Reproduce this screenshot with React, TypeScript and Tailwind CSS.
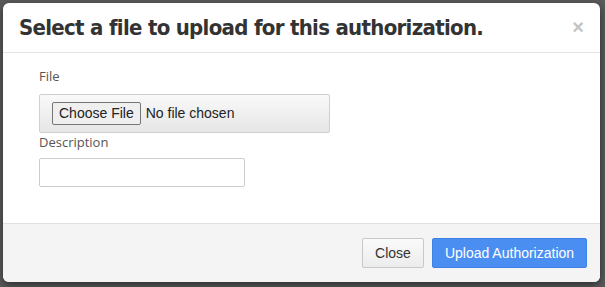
import React from 'react';

const UploadAuthorizationModal = () => {
  return (
    <div className="w-[605px] h-[287px] bg-[#5a5a5a] p-[3px] pr-[5px] pb-[5px] overflow-hidden">
      <div className="h-full rounded-[6px] bg-white flex flex-col overflow-hidden shadow-[0_3px_9px_rgba(0,0,0,0.5)]">
        <div className="h-[50px] shrink-0 border-b border-[#e5e5e5] flex items-center justify-between pl-[16px] pr-[16px]">
          <h4 className="text-[22px] font-semibold text-[#333] tracking-[-0.7px] font-['DejaVu_Sans_Condensed','Open_Sans',sans-serif]">
            Select a file to upload for this authorization.
          </h4>
          <button className="text-[#c4c4c4] text-[20px] font-bold leading-none font-['Liberation_Sans',sans-serif] mb-[2px]">
            ×
          </button>
        </div>

        <div className="flex-1 pl-[36px] pt-[14px] font-['Open_Sans',sans-serif]">
          <label className="block text-[13px] text-[#555] leading-[18px] mb-[9px]">File</label>
          <div className="w-[291px] h-[39px] border border-[#d0d0d0] rounded-[2px] bg-gradient-to-b from-[#f9f9f9] to-[#e6e6e6] flex items-center pl-[12px] font-['Liberation_Sans',sans-serif] text-[14px] text-[#222]">
            <span className="h-[23px] px-[6px] border border-[#767676] rounded-[2px] bg-[#efefef] flex items-center">
              Choose File
            </span>
            <span className="ml-[5px]">No file chosen</span>
          </div>
          <label className="block text-[13px] text-[#555] leading-[18px] mt-0 mb-[7px]">Description</label>
          <input className="w-[206px] h-[29px] border border-[#ccc] rounded-[2px] bg-white outline-none" />
        </div>

        <div className="h-[59px] shrink-0 border-t border-[#e0e0e0] bg-[#f4f4f4] flex items-center justify-end gap-[8px] pr-[13px] font-['Liberation_Sans',sans-serif] text-[14px]">
          <button className="h-[30px] w-[62px] border border-[#c8c8c8] rounded-[2px] bg-gradient-to-b from-[#fafafa] to-[#ececec] text-[#333]">
            Close
          </button>
          <button className="h-[30px] w-[155px] border border-[#3f82e6] rounded-[2px] bg-[#4a8ef2] text-white">
            Upload Authorization
          </button>
        </div>
      </div>
    </div>
  );
};

export default UploadAuthorizationModal;
